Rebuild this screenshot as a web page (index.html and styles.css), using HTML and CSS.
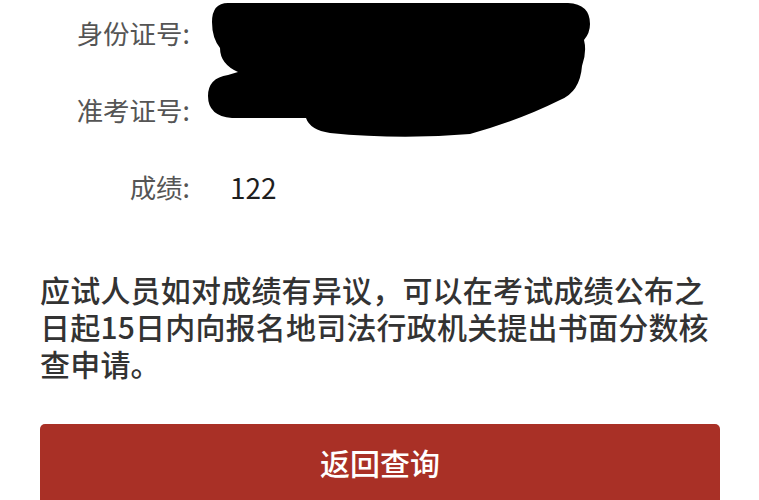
FILE: index.html
```html
<!DOCTYPE html>
<html lang="zh-CN">
<head>
<meta charset="utf-8">
<link rel="stylesheet" href="styles.css">
</head>
<body>
<div class="page">
  <div class="info">
    <div class="label">身份证号:</div><div class="value"></div>
    <div class="label">准考证号:</div><div class="value"></div>
    <div class="label">成绩:</div><div class="value">122</div>
  </div>
  <p class="notice">应试人员如对成绩有异议，可以在考试成绩公布之日起15日内向报名地司法行政机关提出书面分数核查申请。</p>
  <div class="btn">返回查询</div>
  <svg class="redact" width="759" height="150" viewBox="0 0 759 150">
    <path d="M228,3 L568,3 Q590,4 590,24 Q590,33 584,40 Q587,52 582,66 Q580,92 560,100 Q520,120 470,134 Q400,140 330,133 Q310,130 306,118 L232,118 Q208,116 208,96 Q208,78 228,75 L238,72 Q220,64 220,48 Q212,38 212,22 Q212,3 228,3 Z" fill="#000"/>
  </svg>
</div>
</body>
</html>
```
FILE: styles.css
```css
html, body {
  margin: 0;
  padding: 0;
  background: #ffffff;
}
body {
  font-family: "Noto Sans CJK SC", "Noto Sans", sans-serif;
  width: 759px;
  height: 500px;
  overflow: hidden;
}
.page {
  position: relative;
  width: 759px;
  height: 500px;
}
.info {
  display: grid;
  grid-template-columns: 190px 1fr;
  column-gap: 40px;
  row-gap: 37px;
  padding-top: 13px;
}
.label {
  text-align: right;
  font-size: 26.5px;
  line-height: 40px;
  color: #555555;
}
.value {
  font-size: 28px;
  line-height: 40px;
  color: #1e1e1e;
}
.notice {
  margin: 64px 0 0 40px;
  width: 680px;
  font-size: 30px;
  font-weight: 500;
  letter-spacing: 0.2px;
  line-height: 37px;
  color: #333333;
}
.btn {
  margin: 42px 0 0 40px;
  width: 680px;
  height: 80px;
  background: #a93026;
  border-radius: 5px;
  color: #ffffff;
  font-size: 30px;
  font-weight: 500;
  display: flex;
  justify-content: center;
  padding-top: 18px;
  box-sizing: border-box;
  line-height: 40px;
}
.redact {
  position: absolute;
  left: 0;
  top: 0;
}
```
